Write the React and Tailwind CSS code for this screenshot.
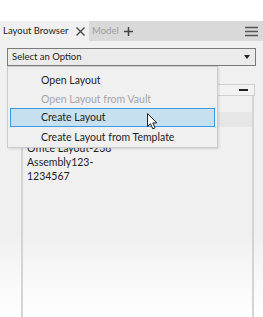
import React from "react";

export default function App() {
  return (
    <div
      className="w-[263px] h-[317px] overflow-hidden bg-white flex flex-col text-[10.5px] text-[#1e1e1e] whitespace-nowrap"
      style={{ fontFamily: 'Lato, "Open Sans", sans-serif' }}
    >
      <div className="h-[21px]" />
      {/* tab bar */}
      <div className="h-[20px] bg-[#d9d9d9] flex items-center text-[9.5px]">
        <div className="h-full w-[89px] bg-[#f0f0f0] flex items-center pl-[3px] gap-[8px]">
          <span>Layout Browser</span>
          <svg width="9" height="9" viewBox="0 0 9 9">
            <path d="M0.5 0.5L8.5 8.5M8.5 0.5L0.5 8.5" stroke="#444" strokeWidth="1.3" />
          </svg>
        </div>
        <span className="ml-[3px] text-[#a0a0a0]">Model</span>
        <svg className="ml-[5px]" width="9" height="9" viewBox="0 0 9 9">
          <path d="M4.5 0V9M0 4.5H9" stroke="#444" strokeWidth="1.5" />
        </svg>
        <div className="flex-1" />
        <svg className="mr-[5px]" width="13" height="11" viewBox="0 0 13 11">
          <path d="M0 1.5H13M0 5.5H13M0 9.5H13" stroke="#555" strokeWidth="1.4" />
        </svg>
      </div>
      {/* body */}
      <div className="relative flex-1 bg-gradient-to-b from-[#f0f0f0] from-[70%] to-white flex flex-col">
        <div className="mt-[7px] mx-[7px] h-[18px] border border-[#7a7a7a] bg-[#ebebeb] flex items-center pl-[4px] pr-[5px] text-[9.5px]">
          <span className="flex-1">Select an Option</span>
          <svg width="6" height="4" viewBox="0 0 6 4">
            <path d="M0 0H6L3 4Z" fill="#222" />
          </svg>
        </div>
        {/* background panel */}
        <div className="ml-[21px] mr-[8px] mt-[18px] flex-1 flex flex-col">
          <div className="h-[12px] border border-[#cfcfcf] bg-[#f2f2f2] flex items-center justify-end pr-[6px]">
            <div className="w-[9px] h-[2px] bg-[#222]" />
          </div>
          <div className="flex-1 border-l-2 border-r-2 border-[#d4d4d4] mr-[1px] flex flex-col">
            <div className="h-[15px] mt-[1px]" />
            <div className="h-[15px] bg-[#e6e6e6]" />
            <div className="pl-[4px] pt-[14px] leading-[14px] text-[10.5px]">
              <div>Office Layout-238</div>
              <div>Assembly123-</div>
              <div>1234567</div>
            </div>
          </div>
        </div>
        {/* dropdown menu */}
        <div className="absolute left-[7px] top-[25px] w-[211px] h-[82px] bg-[#f0f0f0] border border-[#cccccc] shadow-[1px_1px_2px_rgba(0,0,0,0.12)] flex flex-col pt-[3px] px-[2px]">
          <div className="h-[19px] flex items-center pl-[31px] pt-[2px]">Open Layout</div>
          <div className="h-[19px] flex items-center pl-[31px] pt-[2px] text-[#a6a6a6]">Open Layout from Vault</div>
          <div className="relative h-[19px] flex items-center pl-[30px] pt-[1px] bg-[#c6e0ef] border border-[#3c9be0]">
            Create Layout
            <svg className="absolute left-[136px] top-[4px]" width="12" height="17" viewBox="0 0 12 17">
              <path d="M0.5 0.5V13.5L3.5 10.7L5.8 15.8L8 14.8L5.8 9.9H9.8Z" fill="#fff" stroke="#222" strokeWidth="1" strokeLinejoin="round" />
            </svg>
          </div>
          <div className="h-[19px] flex items-center pl-[31px] pt-[2px]">Create Layout from Template</div>
        </div>
      </div>
    </div>
  );
}
